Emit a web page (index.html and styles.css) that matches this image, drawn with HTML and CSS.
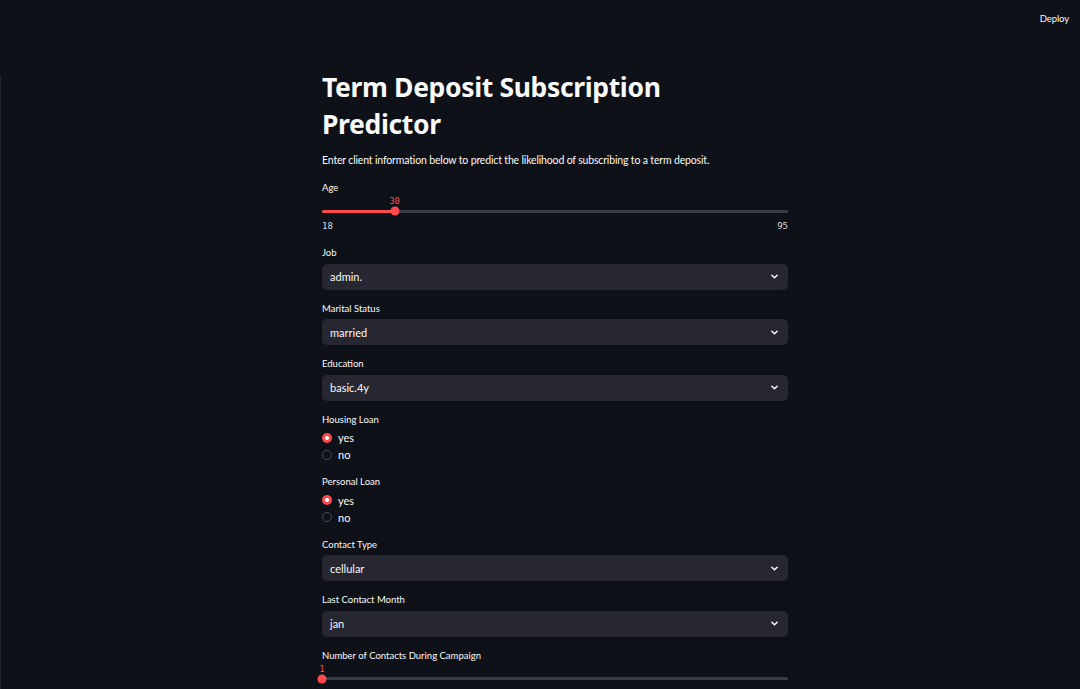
FILE: index.html
```html
<!DOCTYPE html>
<html lang="en">
<head>
<meta charset="utf-8">
<title>Term Deposit Subscription Predictor</title>
<link rel="stylesheet" href="styles.css">
</head>
<body>
<div class="app">
  <div class="edge"></div>
  <header class="topbar"><span class="deploy">Deploy</span></header>
  <main class="main">
    <h1 class="title">Term Deposit Subscription<br>Predictor</h1>
    <p class="subtitle">Enter client information below to predict the likelihood of subscribing to a term deposit.</p>

    <div class="field field-age">
      <div class="label">Age</div>
      <div class="slider">
        <div class="slider-value-row"><span class="slider-value" style="left: 15.58%">30</span></div>
        <div class="track"><div class="fill" style="width: 15.58%"></div><div class="thumb" style="left: 15.58%"></div></div>
        <div class="minmax"><span>18</span><span>95</span></div>
      </div>
    </div>

    <div class="field">
      <div class="label">Job</div>
      <div class="select"><span>admin.</span><svg class="chev" viewBox="0 0 8 5" width="7" height="5"><path d="M1 1l3 3 3-3" fill="none" stroke="#fafafa" stroke-width="1.7" stroke-linecap="round" stroke-linejoin="round"/></svg></div>
    </div>

    <div class="field">
      <div class="label">Marital Status</div>
      <div class="select"><span>married</span><svg class="chev" viewBox="0 0 8 5" width="7" height="5"><path d="M1 1l3 3 3-3" fill="none" stroke="#fafafa" stroke-width="1.7" stroke-linecap="round" stroke-linejoin="round"/></svg></div>
    </div>

    <div class="field">
      <div class="label">Education</div>
      <div class="select"><span>basic.4y</span><svg class="chev" viewBox="0 0 8 5" width="7" height="5"><path d="M1 1l3 3 3-3" fill="none" stroke="#fafafa" stroke-width="1.7" stroke-linecap="round" stroke-linejoin="round"/></svg></div>
    </div>

    <div class="field">
      <div class="label">Housing Loan</div>
      <div class="radios">
        <div class="radio"><span class="dot on"></span><span>yes</span></div>
        <div class="radio"><span class="dot"></span><span>no</span></div>
      </div>
    </div>

    <div class="field">
      <div class="label">Personal Loan</div>
      <div class="radios">
        <div class="radio"><span class="dot on"></span><span>yes</span></div>
        <div class="radio"><span class="dot"></span><span>no</span></div>
      </div>
    </div>

    <div class="field">
      <div class="label">Contact Type</div>
      <div class="select"><span>cellular</span><svg class="chev" viewBox="0 0 8 5" width="7" height="5"><path d="M1 1l3 3 3-3" fill="none" stroke="#fafafa" stroke-width="1.7" stroke-linecap="round" stroke-linejoin="round"/></svg></div>
    </div>

    <div class="field">
      <div class="label">Last Contact Month</div>
      <div class="select"><span>jan</span><svg class="chev" viewBox="0 0 8 5" width="7" height="5"><path d="M1 1l3 3 3-3" fill="none" stroke="#fafafa" stroke-width="1.7" stroke-linecap="round" stroke-linejoin="round"/></svg></div>
    </div>

    <div class="field">
      <div class="label">Number of Contacts During Campaign</div>
      <div class="slider">
        <div class="slider-value-row"><span class="slider-value" style="left: 0%">1</span></div>
        <div class="track"><div class="fill" style="width: 0%"></div><div class="thumb" style="left: 0%"></div></div>
      </div>
    </div>
  </main>
</div>
</body>
</html>
```

FILE: styles.css
```css
* { box-sizing: border-box; }
html, body {
  margin: 0;
  padding: 0;
  background: #0e1117;
  height: 100%;
  overflow: hidden;
}
body {
  font-family: "Lato", "Noto Sans", "Liberation Sans", sans-serif;
  color: #fafafa;
}
.app {
  position: relative;
  width: 1080px;
  height: 689px;
  overflow: hidden;
}
.edge {
  position: absolute;
  left: 0;
  top: 75px;
  bottom: 0;
  width: 1px;
  background: #1f2630;
}
.topbar {
  position: absolute;
  top: 0;
  left: 0;
  right: 0;
  height: 38px;
  display: flex;
  justify-content: flex-end;
  align-items: center;
  padding-right: 11px;
}
.deploy {
  font-size: 9.5px;
  letter-spacing: -0.1px;
  color: #fafafa;
  line-height: 12px;
}
.main {
  width: 466px;
  margin-left: 322px;
  padding-top: 69px;
  display: flex;
  flex-direction: column;
  gap: 11px;
}
.title {
  margin: 0;
  font-family: "Noto Sans", "Lato", sans-serif;
  font-size: 26.5px;
  line-height: 37px;
  font-weight: 700;
  letter-spacing: -0.35px;
  height: 74px;
}
.subtitle {
  margin: -2px 0 0 0;
  font-size: 10.5px;
  letter-spacing: -0.16px;
  line-height: 16px;
  height: 16px;
}
.field-age { margin-top: 1px; }
.field {
  display: flex;
  flex-direction: column;
}
.label {
  font-size: 9.5px;
  line-height: 14px;
  height: 14px;
  padding-top: 1px;
  margin-bottom: 4.5px;
}
.select {
  height: 26px;
  background: #262730;
  border-radius: 5px;
  display: flex;
  align-items: center;
  justify-content: space-between;
  padding: 0 10px 0 8px;
  font-size: 11px;
}
.chev { display: block; }
.radios {
  display: flex;
  flex-direction: column;
  margin-top: -1px;
}
.radio {
  height: 17px;
  display: flex;
  align-items: center;
  gap: 6px;
  font-size: 11px;
}
.dot {
  width: 10px;
  height: 10px;
  border-radius: 50%;
  border: 1px solid #4a4d56;
  background: #0e1117;
  flex: none;
}
.dot.on {
  border: none;
  background: radial-gradient(circle, #ffffff 0 1.8px, #ff4b4b 2.2px);
}
.slider {
  margin-top: -4.5px;
  height: 40px;
  display: flex;
  flex-direction: column;
  padding-top: 2px;
}
.slider-value-row {
  position: relative;
  height: 10px;
}
.slider-value {
  position: absolute;
  top: 0;
  transform: translateX(-50%);
  font-family: "DejaVu Sans Mono", "Liberation Mono", monospace;
  font-size: 9px;
  line-height: 10px;
  color: #ff4b4b;
}
.track {
  position: relative;
  height: 3px;
  margin: 3.5px 0;
  background: #3a3c45;
  border-radius: 2px;
}
.fill {
  position: absolute;
  left: 0;
  top: 0;
  bottom: 0;
  background: #ff4b4b;
  border-radius: 2px;
}
.thumb {
  position: absolute;
  top: 50%;
  width: 9px;
  height: 9px;
  border-radius: 50%;
  background: #ff4b4b;
  transform: translate(-50%, -50%);
}
.minmax {
  margin-top: 5px;
  height: 10px;
  display: flex;
  justify-content: space-between;
  font-family: "DejaVu Sans Mono", "Liberation Mono", monospace;
  font-size: 9px;
  line-height: 10px;
  color: #d8d8dc;
}
```
